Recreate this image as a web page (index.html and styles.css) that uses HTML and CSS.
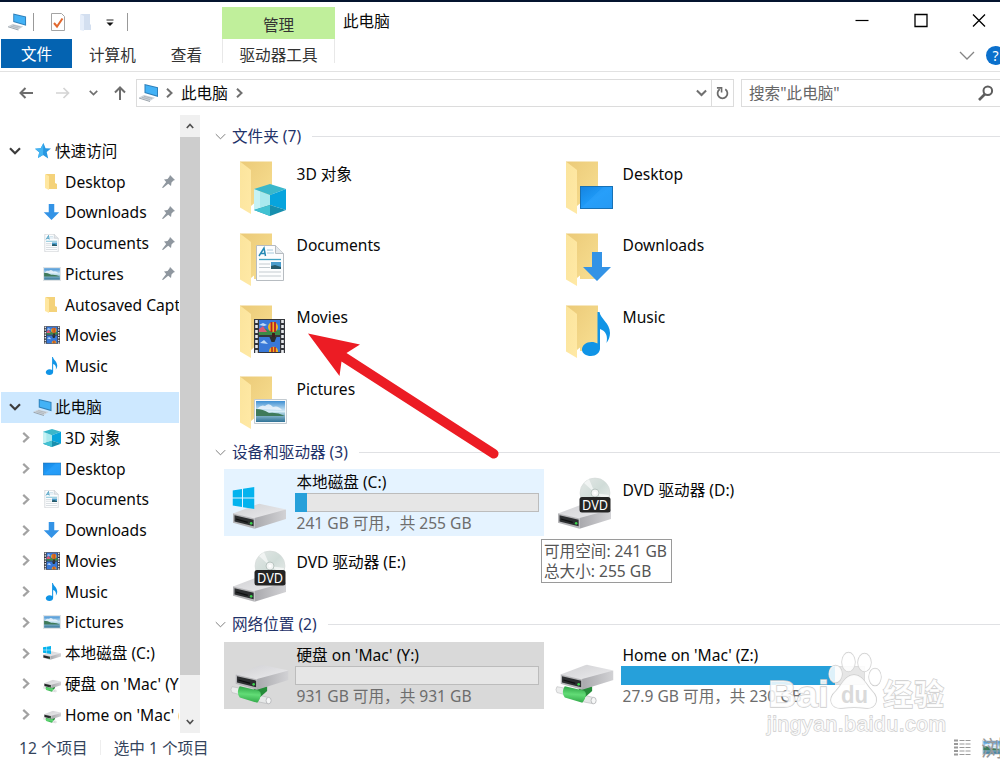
FILE: index.html
```html
<!DOCTYPE html>
<html lang="zh-CN">
<head>
<meta charset="utf-8">
<title>此电脑</title>
<link rel="stylesheet" href="styles.css">
</head>
<body>
<svg class="defs" width="0" height="0" aria-hidden="true">
  <defs>
    <linearGradient id="gBack" x1="0" y1="0" x2="1" y2="1"><stop offset="0" stop-color="#ebca78"/><stop offset="1" stop-color="#f8df92"/></linearGradient>
    <linearGradient id="gFlap" x1="0" y1="0" x2="1" y2="1"><stop offset="0" stop-color="#fbe49c"/><stop offset="1" stop-color="#ffe9a6"/></linearGradient>
    <linearGradient id="gScreen" x1="0" y1="0" x2="1" y2="1"><stop offset="0" stop-color="#1583e0"/><stop offset=".5" stop-color="#1e9bf8"/><stop offset="1" stop-color="#1b94f0"/></linearGradient>
    <linearGradient id="gSky" x1="0" y1="0" x2="0" y2="1"><stop offset="0" stop-color="#3f8fd2"/><stop offset=".5" stop-color="#d8edf7"/><stop offset=".6" stop-color="#9cc7d8"/><stop offset="1" stop-color="#2f7296"/></linearGradient>
    <linearGradient id="gMetal" x1="0" y1="0" x2="1" y2="1"><stop offset="0" stop-color="#d0d0d3"/><stop offset="1" stop-color="#ececee"/></linearGradient>
    <linearGradient id="gSide" x1="0" y1="0" x2="1" y2="0"><stop offset="0" stop-color="#a9a9ad"/><stop offset="1" stop-color="#d2d2d5"/></linearGradient>
    <linearGradient id="gGreen" x1=".1" y1="0" x2="0" y2="1"><stop offset="0" stop-color="#2fa647"/><stop offset=".45" stop-color="#62dc76"/><stop offset="1" stop-color="#2aa142"/></linearGradient>
    <linearGradient id="gDisc" x1="0" y1="0" x2="1" y2="1"><stop offset="0" stop-color="#e4e8e6"/><stop offset=".5" stop-color="#d0dcd8"/><stop offset="1" stop-color="#eceeed"/></linearGradient>
  </defs>
  <symbol id="folder" viewBox="0 0 66 67">
    <path d="M16 8.500H48V54H26L16 45z" fill="url(#gBack)"/>
    <path d="M16 8.500L27 17V61L16 54.500z" fill="url(#gFlap)"/><path d="M27 53l3-2.500v6h-3z" fill="#fff"/>
  </symbol>
  <symbol id="cube" viewBox="0 0 32 32">
    <path d="M0 5L16 11V21L0 26z" fill="#a9e9ee"/><path d="M0 5l6 2v17l-6 2z" fill="#c6f2f4"/>
    <path d="M0 5L16 0L32 5L16 11z" fill="#3ab7ca"/><path d="M16 11L32 5V26L16 21z" fill="#07a4dd"/>
    <path d="M0 26L16 21L32 26L16 32z" fill="#178fae"/><path d="M0 26l16-5v11z" fill="#42c2d2"/>
  </symbol>
  <symbol id="screen" viewBox="0 0 33 23">
    <rect x=".5" y=".5" width="32" height="22" fill="url(#gScreen)" stroke="#1871b5"/><path d="M1 22L23 1h9v21z" fill="#42adff" opacity=".25"/>
  </symbol>
  <symbol id="doc" viewBox="0 0 28 36">
    <path d="M.5.5H19.500L27.500 8.500V35.500H.5z" fill="#fcfdfe" stroke="#b7bcc1"/><path d="M19.500.5v8h8" fill="#e4e8ec" stroke="#b7bcc1"/>
    <path d="M3 11L8 3l1.500 8M5 8.500h4" fill="none" stroke="#2589b4" stroke-width="1.500"/>
    <path d="M11 5h6M11 8h7" stroke="#a8cadc"/><path d="M3 14.500h22" stroke="#43a4c4" stroke-width="1.300"/>
    <path d="M3 19h11M3 22.500h11M3 27h22M3 31h22" stroke="#c3cbd0" stroke-width="1.200"/><path d="M15 17h10v7H15z" fill="#4a9dcc"/><path d="M15 21l4-1 6 2v2H15z" fill="#265a6a"/>
  </symbol>
  <symbol id="arrow" viewBox="0 0 28 29"><path d="M9 0h10v15h9L14 29 0 15h9z" fill="#3393e6"/></symbol>
  <symbol id="note" viewBox="0 0 28 44">
    <path d="M15.500 0H17.500c1 7 10.500 11 10.500 21 0 4-1.500 7-3.500 10 1.500-7-.5-12-6.500-14v19.500c0 4-4 7.500-9 7.500s-9-2.500-9-6.500c0-4 4-7.500 9.500-7.500 2.500 0 4.500.6 6 1.500z" fill="#1094e6"/>
  </symbol>
  <symbol id="film" viewBox="0 0 31 34">
    <path d="M0 0h31v34H0z" fill="#34363c"/><path d="M5 1h21v15H5zM5 18h21v15H5z" fill="#3878d8"/>
    <path d="M5 12l5-3 6 3 10-1v5H5z" fill="#3d8a46"/><path d="M5 10l4-3 4 6H5z" fill="#d65b77"/>
    <circle cx="19" cy="8" r="5" fill="#efb522"/><path d="M17.500 3v10M21 3v10" stroke="#b51e24" stroke-width="1.800"/><path d="M18 14h3v4h-3z" fill="#402018"/>
    <path d="M15.500 18h7l-2 5h-3z" fill="#2b2f2c"/><path d="M15 33c0-7 9-7 9 0z" fill="#efb522"/><path d="M18 28v5M21 28v5" stroke="#b51e24" stroke-width="1.500"/>
    <path d="M5 6l4-2 4 2-3 1zM6 24l4-3 4 4z" fill="#bfdaf6"/>
    <path d="M2.500 1v33M28.500 1v33" stroke="#e9ebee" stroke-width="2.600" stroke-dasharray="3 2"/>
  </symbol>
  <symbol id="photo" viewBox="0 0 33 25">
    <path d="M.5.5h32v24H.5z" fill="#f7f9fb" stroke="#c3cbd1"/><path d="M2 2h29v21H2z" fill="url(#gSky)"/>
    <path d="M3 10q4-5 8-3 4-4 8 1 5-2 9 3z" fill="#f2f8fc" opacity=".8"/><path d="M2 10q7 0 13 4 8-1 16 3H2z" fill="#3f7a5a"/>
  </symbol>
  <symbol id="drive" viewBox="0 0 54 26">
    <path d="M0 10.500L25 1q2-1 4 0L53 6q1 1 0 2L23 16 0 11z" fill="url(#gMetal)"/><path d="M22 15L54 6.500V16L22 26z" fill="url(#gSide)"/>
    <path d="M0 10.500L22 15.500V26L0 20z" fill="#b5b5b8"/><path d="M1.500 12.300L21 16.700V23.500L1.500 18.700z" fill="#2c2e30"/><path d="M3 16l12 3.500" stroke="#0f1011" stroke-width="1.200"/><circle cx="18.500" cy="20.500" r="1.300" fill="#3bd44d"/>
  </symbol>
  <symbol id="winlogo" viewBox="0 0 22 22"><path d="M0 3.500L9.500 2v8.500H0zM10.500 1.800L22 0v10.500H10.500zM0 11.500h9.500V20L0 18.500zM10.500 11.500H22V22L10.500 20.200z" fill="#04b3ee"/></symbol>
  <symbol id="pipe" viewBox="0 0 44 20">
    <path d="M2 1.500L10 3v6.500L2 7.500q-2-3 0-6z" fill="#eceded" stroke="#b9bbbc" stroke-width=".6"/>
    <path d="M29 10l10 2.500v6.500l-10-2z" fill="#e6e8e8" stroke="#b2b4b6" stroke-width=".6"/><ellipse cx="39.500" cy="15.700" rx="2.600" ry="3.300" fill="#f6f7f7" stroke="#aeb0b2" stroke-width=".8"/>
    <path d="M24 4L38 1v5l-7 6z" fill="#258c39"/><path d="M10 1l19 4.500q3 1 2.500 5t-3.500 7.500L10 12.500q-4-5.500 0-11.500z" fill="url(#gGreen)"/>
  </symbol>
  <symbol id="pc" viewBox="0 0 20 18">
    <path d="M5.500 0L19 3.200V13L5.500 9z" fill="#2f7fb8"/><path d="M6.500 1.300L18 4v7.500L6.500 8.200z" fill="#43b2f6"/>
    <path d="M0 13.500L5 11l11 2.800L11 17z" fill="#cdd3d9"/><path d="M0 13.500L11 17v1L0 14.500z" fill="#99a2aa"/><path d="M3 13.300l8 2.200M5 12.300l8 2" stroke="#98a3ad" stroke-width=".6"/>
  </symbol>
  <symbol id="sfolder" viewBox="0 0 12 16"><path d="M1 0h9v9l2 1v5H3z" fill="#f4d27a"/><path d="M0 0l4 2v14l-4-2z" fill="#ffe7a0"/></symbol>
  <symbol id="pin" viewBox="0 0 13 13"><path d="M8 0l5 5-1.500.6L9.500 7.500 9 11 6.200 8.700 1 13l-1-.5L4.200 7 2 4.500l3.600-.6L7.500 1.500z" fill="#8f979f"/></symbol>
  <symbol id="star" viewBox="0 0 16 16"><path d="M8.500 0l2 5.200 5.500.2-4.300 3.700 1.500 6.400L8 12l-5 3 1.200-5.800L0 5.800l5.700-.6z" fill="#2797e2"/><path d="M8.500 0L8 12l-5 3 1.200-5.800L0 5.800l5.700-.6z" fill="#45b4f2"/></symbol>
  <symbol id="right" viewBox="0 0 7 10"><path d="M1 .8L5.500 5 1 9.200" fill="none" stroke="currentColor" stroke-width="2"/></symbol>
  <symbol id="down" viewBox="0 0 12 8"><path d="M1 1.200L6 6.200 11 1.200" fill="none" stroke="currentColor" stroke-width="2.200"/></symbol>
  <symbol id="thin" viewBox="0 0 14 8"><path d="M1 1l6 6 6-6" fill="none" stroke="currentColor" stroke-width="1.200"/></symbol>
  <symbol id="sdrive" viewBox="0 0 18 18"><use href="#drive" x="0" y="7" width="18" height="9"/><use href="#winlogo" x="0" y="2" width="8" height="8"/></symbol>
  <symbol id="snet" viewBox="0 0 18 18"><use href="#pipe" x="0" y="11" width="14" height="6.500"/><use href="#drive" x="1" y="4.500" width="18" height="9"/></symbol>
  <symbol id="dvd" viewBox="0 0 66 67">
    <use href="#drive" x="9" y="35" width="53" height="26"/>
    <circle cx="46" cy="25" r="15" fill="url(#gDisc)" stroke="#d3d8d6" stroke-width=".6"/><path d="M46 25L35 15l5-4zM46 25l12 8 2-6z" fill="#fff" opacity=".6"/><circle cx="46" cy="25" r="4" fill="#f2f4f3" stroke="#b9c5c1"/><circle cx="46" cy="25" r="1.500" fill="#fff"/>
    <rect x="30.500" y="29" width="31" height="15.500" rx="2.500" fill="#242424"/>
    <text x="46" y="41.500" text-anchor="middle" textLength="26" lengthAdjust="spacingAndGlyphs" class="dvd-text">DVD</text>
  </symbol>
  <symbol id="netdrive" viewBox="0 0 66 67"><use href="#pipe" x="6" y="43" width="43" height="20"/><use href="#drive" x="11.500" y="22" width="53" height="26"/></symbol>
</svg>

<div class="window">
  <header class="ribbon">
    <div class="left">
      <div class="quick">
        <svg class="q-pc"><use href="#pc"/></svg><i class="sep"></i>
        <svg class="q-doc" viewBox="0 0 14 18"><path d="M.5.5h10l3 3v14H.5z" fill="#fff" stroke="#a4a4a4"/><path d="M3 10l3 3.500L11.500 5.500" fill="none" stroke="#e2682e" stroke-width="2"/></svg>
        <svg class="q-new" viewBox="0 0 12 17"><path d="M1 0h9v10l1 1v5H3z" fill="#d3dff0"/><path d="M0 0l4 2v15l-4-1z" fill="#e6eefa"/></svg>
        <svg class="q-more" viewBox="0 0 8 8"><path d="M.5 1h7" stroke="#222"/><path d="M.5 3.500h7L4 7z" fill="#111"/></svg><i class="sep"></i>
      </div>
      <nav class="tabs"><span class="tab file">文件</span><span class="tab computer">计算机</span><span class="tab view">查看</span></nav>
    </div>
    <div class="context"><span class="manage">管理</span><span class="tools">驱动器工具</span></div>
    <div class="title">此电脑</div>
    <div class="controls">
      <div class="buttons">
        <svg viewBox="0 0 14 14"><path d="M.5 7.500h13" stroke="#000" stroke-width="1.200"/></svg>
        <svg viewBox="0 0 14 14"><path d="M1 1.500h12v12H1z" fill="none" stroke="#000" stroke-width="1.300"/></svg>
        <svg viewBox="0 0 14 14"><path d="M1 1.500l12 12M13 1.500L1 13.500" stroke="#000" stroke-width="1.300"/></svg>
      </div>
      <div class="help"><svg class="fold" viewBox="0 0 16 9"><path d="M1 1l7 7 7-7" fill="none" stroke="#848484" stroke-width="1.300"/></svg><span class="q">?</span></div>
    </div>
  </header>

  <div class="navbar">
    <svg class="n-back" viewBox="0 0 14 12"><path d="M14 6H1.500M6.500 1l-5 5 5 5" fill="none" stroke="#6d6d6d" stroke-width="2"/></svg>
    <svg class="n-fwd" viewBox="0 0 14 12"><path d="M0 6h12.500M7.500 1l5 5-5 5" fill="none" stroke="#d4d4d4" stroke-width="1.700"/></svg>
    <svg class="n-hist"><use href="#down"/></svg>
    <svg class="n-up" viewBox="0 0 12 14"><path d="M6 14V1.500M1 6.500l5-5 5 5" fill="none" stroke="#6d6d6d" stroke-width="2"/></svg>
    <div class="address">
      <svg class="a-pc"><use href="#pc"/></svg><svg class="crumb"><use href="#right"/></svg><span>此电脑</span><svg class="crumb"><use href="#right"/></svg>
      <svg class="a-down"><use href="#down"/></svg>
      <span class="refresh"><svg viewBox="0 0 14 14"><path d="M4 3A5.300 5.300 0 1 0 10 3" fill="none" stroke="#6b6b6b" stroke-width="1.900"/><path d="M1 1.500h5v5" fill="none" stroke="#6b6b6b" stroke-width="1.700"/></svg></span>
    </div>
    <div class="search"><span>搜索"此电脑"</span><svg viewBox="0 0 16 16"><circle cx="9.800" cy="5.800" r="4.300" fill="none" stroke="#5d5d5d" stroke-width="2"/><path d="M7 9L1 15" stroke="#5d5d5d" stroke-width="2.600"/></svg></div>
  </div>

  <div class="body">
    <aside class="tree">
      <div class="row top"><svg class="tw open"><use href="#down"/></svg><svg class="i-star"><use href="#star"/></svg><span>快速访问</span></div>
      <div class="row sub"><svg class="ic"><use href="#sfolder" x="2" y="1" width="12" height="16"/></svg><span>Desktop</span><svg class="pin"><use href="#pin"/></svg></div>
      <div class="row sub"><svg class="ic"><use href="#arrow" x="0" y="1" width="17" height="16"/></svg><span>Downloads</span><svg class="pin"><use href="#pin"/></svg></div>
      <div class="row sub"><svg class="ic"><use href="#doc" x="1" y="0" width="15" height="18"/></svg><span>Documents</span><svg class="pin"><use href="#pin"/></svg></div>
      <div class="row sub"><svg class="ic"><use href="#photo" x="0" y="2" width="18" height="14"/></svg><span>Pictures</span><svg class="pin"><use href="#pin"/></svg></div>
      <div class="row sub"><svg class="ic"><use href="#sfolder" x="2" y="1" width="12" height="16"/></svg><span>Autosaved Captures</span></div>
      <div class="row sub"><svg class="ic"><use href="#film" x="1" y="0" width="16" height="18"/></svg><span>Movies</span></div>
      <div class="row sub last"><svg class="ic"><use href="#note" x="2" y="0" width="13" height="18"/></svg><span>Music</span></div>
      <div class="row top selected"><svg class="tw open"><use href="#down"/></svg><svg class="i-pc"><use href="#pc"/></svg><span>此电脑</span></div>
      <div class="row leaf"><svg class="tw"><use href="#right"/></svg><svg class="ic"><use href="#cube" width="18" height="18"/></svg><span>3D 对象</span></div>
      <div class="row leaf"><svg class="tw"><use href="#right"/></svg><svg class="ic"><use href="#screen" x="0" y="2" width="18" height="14"/></svg><span>Desktop</span></div>
      <div class="row leaf"><svg class="tw"><use href="#right"/></svg><svg class="ic"><use href="#doc" x="1" y="0" width="15" height="18"/></svg><span>Documents</span></div>
      <div class="row leaf"><svg class="tw"><use href="#right"/></svg><svg class="ic"><use href="#arrow" x="0" y="1" width="17" height="16"/></svg><span>Downloads</span></div>
      <div class="row leaf"><svg class="tw"><use href="#right"/></svg><svg class="ic"><use href="#film" x="1" y="0" width="16" height="18"/></svg><span>Movies</span></div>
      <div class="row leaf"><svg class="tw"><use href="#right"/></svg><svg class="ic"><use href="#note" x="2" y="0" width="13" height="18"/></svg><span>Music</span></div>
      <div class="row leaf"><svg class="tw"><use href="#right"/></svg><svg class="ic"><use href="#photo" x="0" y="2" width="18" height="14"/></svg><span>Pictures</span></div>
      <div class="row leaf"><svg class="tw"><use href="#right"/></svg><svg class="ic"><use href="#sdrive"/></svg><span>本地磁盘 (C:)</span></div>
      <div class="row leaf"><svg class="tw"><use href="#right"/></svg><svg class="ic"><use href="#snet"/></svg><span>硬盘 on 'Mac' (Y:)</span></div>
      <div class="row leaf"><svg class="tw"><use href="#right"/></svg><svg class="ic"><use href="#snet"/></svg><span>Home on 'Mac' (Z:)</span></div>
    </aside>
    <div class="scrollbar">
      <svg class="up" viewBox="0 0 8 6"><path d="M.8 5L4 1.500 7.200 5" fill="none" stroke="#505050" stroke-width="1.700"/></svg>
      <div class="thumb"></div>
      <svg class="dn" viewBox="0 0 8 6"><path d="M.8 1L4 4.500 7.200 1" fill="none" stroke="#505050" stroke-width="1.700"/></svg>
    </div>
    <main class="content">
      <h2 class="group"><svg><use href="#thin"/></svg><span>文件夹 (7)</span></h2>
      <section class="grid folders">
        <div class="tile"><svg class="big"><use href="#folder"/><use href="#cube" x="30" y="31" width="32" height="32"/></svg><div class="info"><b>3D 对象</b></div></div>
        <div class="tile"><svg class="big"><use href="#folder"/><use href="#screen" x="30" y="33" width="33" height="23"/></svg><div class="info"><b>Desktop</b></div></div>
        <div class="tile"><svg class="big"><use href="#folder"/><use href="#doc" x="32" y="20" width="28" height="36"/></svg><div class="info"><b>Documents</b></div></div>
        <div class="tile"><svg class="big"><use href="#folder"/><use href="#arrow" x="33" y="27" width="28" height="29"/></svg><div class="info"><b>Downloads</b></div></div>
        <div class="tile"><svg class="big"><use href="#folder"/><use href="#film" x="30" y="22" width="31" height="34"/></svg><div class="info"><b>Movies</b></div></div>
        <div class="tile"><svg class="big"><use href="#folder"/><use href="#note" x="32" y="15" width="28" height="44"/></svg><div class="info"><b>Music</b></div></div>
        <div class="tile"><svg class="big"><use href="#folder"/><use href="#photo" x="30" y="31" width="33" height="25"/></svg><div class="info"><b>Pictures</b></div></div>
      </section>
      <h2 class="group"><svg><use href="#thin"/></svg><span>设备和驱动器 (3)</span></h2>
      <section class="grid">
        <div class="tile hover"><svg class="big"><use href="#drive" x="9" y="34" width="53" height="26"/><use href="#winlogo" x="8.500" y="18" width="22" height="22"/></svg><div class="info disk"><b>本地磁盘 (C:)</b><div class="bar"><i style="width:12px"></i></div><small>241 GB 可用，共 255 GB</small></div></div>
        <div class="tile"><svg class="big"><use href="#dvd" x="-1" y="-1" width="66" height="67"/></svg><div class="info"><b>DVD 驱动器 (D:)</b></div></div>
        <div class="tile"><svg class="big"><use href="#dvd"/></svg><div class="info"><b>DVD 驱动器 (E:)</b></div></div>
      </section>
      <h2 class="group network"><svg><use href="#thin"/></svg><span>网络位置 (2)</span></h2>
      <section class="grid">
        <div class="tile picked"><svg class="big"><use href="#netdrive"/></svg><div class="info disk"><b>硬盘 on 'Mac' (Y:)</b><div class="bar"></div><small>931 GB 可用，共 931 GB</small></div></div>
        <div class="tile"><svg class="big"><use href="#netdrive" x="-1"/></svg><div class="info disk"><b>Home on 'Mac' (Z:)</b><div class="bar full"><i style="width:214px"></i></div><small>27.9 GB 可用，共 230 GB</small></div></div>
      </section>
    </main>
  </div>

  <footer class="status"><span>12 个项目</span><i></i><span>选中 1 个项目</span>
    <svg class="list" viewBox="0 0 18 17"><path d="M1 1.500h4M1 5h4M1 8.500h4M1 12h4M1 15.500h4" stroke="#999" stroke-width="2"/><path d="M6.500 1.500h5M12.500 1.500h5M6.500 5h5M12.500 5h5M6.500 8.500h5M12.500 8.500h5M6.500 12h5M12.500 12h5M6.500 15.500h5M12.500 15.500h5" stroke="#999"/></svg>
    <svg class="thumbs"><use href="#photo" width="20" height="15"/></svg>
  </footer>

  <div class="tooltip">可用空间: 241 GB<br>总大小: 255 GB</div>
  <svg class="pointer" viewBox="300 325 205 140"><path d="M308 333.500L360 344.500 346.500 353 496 449.500A4.800 4.800 0 0 1 491.500 458L341.500 361.500 339.500 376z" fill="#ec1c24"/></svg>
  <svg class="watermark" viewBox="760 645 240 114">
    <g fill="#fff" fill-opacity=".85" stroke="#cdcdcd" stroke-width="1.300" paint-order="stroke">
      <ellipse cx="835.500" cy="674" rx="6.500" ry="8.500"/><ellipse cx="848.500" cy="662" rx="6.500" ry="9.500"/><ellipse cx="864.500" cy="662.500" rx="6.500" ry="9"/><ellipse cx="875" cy="677" rx="6" ry="8.500"/>
      <path d="M854 675c9 0 12 10 18 16 8 8 4 18-6 17-8-1-16-1-24 0-11 1-15-9-6-17 6-6 9-16 18-16z"/>
      <text x="768" y="707" class="wm-brand" textLength="61" lengthAdjust="spacingAndGlyphs">Bai</text>
      <text x="883" y="705" class="wm-cn" textLength="61">经验</text>
      <text x="767" y="731" class="wm-url" textLength="179">jingyan.baidu.com</text>
    </g>
    <text x="841" y="703" class="wm-du" textLength="27" lengthAdjust="spacingAndGlyphs">du</text>
    <text x="981" y="756" class="wm-corner">浏览</text>
  </svg>
</div>
</body>
</html>
```
FILE: styles.css
```css
* { box-sizing: border-box; }
body { margin: 0; }
svg { display: block; flex: none; overflow: visible; }
.defs { position: absolute; }
.window { position: relative; display: flex; flex-direction: column; width: 1000px; height: 759px; overflow: hidden; background: #fff; border-top: 2px solid #04142f; color: #080808; font: 15.6px/20px "Noto Sans", "Noto Sans CJK SC", sans-serif; white-space: nowrap; }

.ribbon { display: flex; height: 70px; border-bottom: 1px solid #e2e2e2; }
.left { width: 222px; }
.quick { display: flex; align-items: center; height: 37px; padding: 3px 0 0 8px; }
.q-pc { width: 19px; height: 18px; }
.sep { width: 1px; height: 18px; margin-left: 6px; background: #999; }
.q-doc { width: 14px; height: 18px; margin-left: 17px; }
.q-new { width: 12px; height: 17px; margin-left: 15px; }
.q-more { width: 8px; height: 8px; margin: 2px 3px 0 14px; }
.q-more + .sep { margin-left: 10px; }
.tabs { display: flex; }
.tab { height: 30px; line-height: 33px; color: #333; }
.file { width: 71px; margin-left: 1px; text-align: center; color: #fff; background: #0463b1; line-height: 31px; height: 29px; }
.computer { margin-left: 17px; }
.view { margin-left: 35px; }
.context { display: flex; flex-direction: column; width: 113px; padding-top: 5px; text-align: center; color: #333; }
.manage { height: 32px; line-height: 36px; background: #c0ef9b; }
.tools { height: 24px; line-height: 33px; border: solid #e8e8e8; border-width: 0 1px; }
.title { margin-left: 8px; line-height: 38px; }
.controls { display: flex; flex-direction: column; margin-left: auto; width: 145px; }
.buttons { display: flex; gap: 44.500px; padding: 11px 0 0 0; }
.buttons svg { width: 14px; height: 14px; }
.help { display: flex; align-items: center; margin-top: 18px; padding-left: 104px; height: 20px; gap: 11px; }
.fold { width: 16px; height: 9px; }
.q { flex: none; width: 19px; height: 19px; border-radius: 50%; background: #0b70cc; color: #fff; text-align: center; line-height: 19px; font-size: 14px; }

.navbar { display: flex; align-items: center; height: 43px; padding: 0 0 1px 19px; color: #707070; }
.n-back, .n-fwd { width: 14px; height: 12px; }
.n-fwd { margin-left: 23px; }
.n-hist { width: 9px; height: 6px; margin-left: 19px; }
.n-up { width: 12px; height: 14px; margin-left: 16px; }
.address { display: flex; flex: none; align-items: center; width: 598px; height: 28px; margin-left: 10px; border: 1px solid #dcdcdc; padding-left: 2px; }
.address span:not(.refresh) { color: #080808; margin: 0 8px; }
.a-pc { width: 20px; height: 18px; margin-right: 7px; }
.crumb { width: 7px; height: 10px; }
.a-down { width: 11px; height: 8px; margin: 0 4px 0 auto; }
.refresh { display: grid; place-items: center; width: 22px; height: 26px; border-left: 1px solid #dcdcdc; }
.refresh svg { width: 13px; height: 14px; }
.search { display: flex; flex: none; align-items: center; justify-content: space-between; width: 262px; height: 28px; margin-left: 7px; border: 1px solid #dcdcdc; padding: 0 8px 0 7px; color: #666; }
.search svg { width: 16px; height: 16px; }

.body { display: flex; height: 618px; }
.tree { width: 179px; padding-top: 20.500px; overflow: hidden; }
.row { display: flex; align-items: center; height: 30.740px; }
.top { padding-left: 9px; }
.open { width: 12px; height: 8px; color: #3c3c3c; }
.i-star { width: 16px; height: 16px; margin: 0 4px 0 14px; }
.i-pc { width: 20px; height: 17px; margin: 0 2px 0 12px; }
.sub { padding-left: 43px; }
.last { margin-bottom: 10.500px; }
.ic { width: 18px; height: 18px; margin-right: 4px; }
.pin { width: 13px; height: 13px; margin: 0 4px 0 auto; }
.selected { background: #cde8ff; margin-left: 1px; padding-left: 8px; }
.leaf { padding-left: 22px; }
.leaf .tw { width: 8px; height: 11px; margin-right: 13px; color: #a2a2a2; }
.scrollbar { display: flex; flex-direction: column; align-items: center; width: 20px; margin-left: 1px; background: #f0f0f0; }
.up, .dn { width: 8px; height: 6px; margin: 8px 0; }
.thumb { width: 20px; height: 538px; background: #cdcdcd; }
.dn { margin-top: auto; }

.content { flex: 1; padding: 5px 0 0 15px; }
.group { display: flex; align-items: center; height: 33px; margin: 0; font-size: 15.6px; font-weight: 400; color: #1f3269; }
.group span { margin-top: -1px; }
.group svg { width: 11px; height: 7px; margin-right: 6px; color: #777; }
.group::after { content: ""; flex: 1; height: 1px; margin-left: 11px; background: #e0e1e4; }
.network { height: 34px; }
.grid { display: grid; grid-template-columns: 320px 320px; grid-auto-rows: 67px; gap: 5px 6px; margin-left: 9px; }
.folders { row-gap: 4.800px; margin-bottom: .6px; }
.tile { display: flex; }
.big { width: 66px; height: 67px; }
.info { padding: 11px 0 0 6.500px; }
.folders .info { padding-top: 10.500px; }
.info b { display: block; font-weight: 400; }
.disk { padding-top: 3px; }
.disk .bar { margin: 1px 0 1px -2px; width: 244px; height: 19px; border: 1px solid #bcbcbc; background: #e6e6e6; }
.bar i { display: block; width: 0; height: 19px; margin: -1px 0 0 -1px; background: #26a0da; }
.info small { display: block; font-size: 15.6px; color: #6d6d6d; }
.disk .full { border-color: #dcdcdc; }
.hover { background: #e5f3ff; }
.picked { background: #d9d9d9; }

.status { display: flex; align-items: center; height: 26px; padding: 3px 0 0 19px; color: #34445c; }
.status i { width: 1px; height: 15px; margin: 0 13px 0 12px; background: #eee; }
.list { width: 18px; height: 17px; margin-left: auto; }
.thumbs { width: 20px; height: 15px; margin: 0 -2px 0 11px; }

.tooltip { position: absolute; left: 541px; top: 537px; width: 131px; height: 44px; padding: 1px 0 0 2px; border: 1px solid #9a9a9a; background: #fff; color: #555; }
.pointer { position: absolute; left: 300px; top: 323px; width: 205px; height: 140px; }
.watermark { position: absolute; left: 760px; top: 643px; width: 240px; height: 114px; }
.dvd-text { font: 13.5px "Noto Sans", sans-serif; fill: #fff; }
.wm-brand { font: bold 37px "Liberation Sans", sans-serif; }
.wm-cn { font: bold 30px "Noto Sans CJK SC", sans-serif; }
.wm-url { font: 21px "Liberation Sans", sans-serif; }
.wm-du { font: bold 23px "Liberation Sans", sans-serif; fill: #dadada; }
.wm-corner { font: 22px "Noto Sans CJK SC", sans-serif; fill: #999; }
```
